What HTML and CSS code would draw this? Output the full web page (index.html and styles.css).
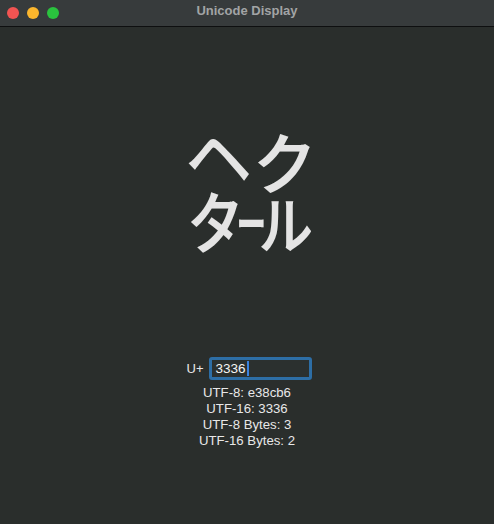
FILE: index.html
```html
<!DOCTYPE html>
<html>
<head>
<meta charset="utf-8">
<link rel="stylesheet" href="styles.css">
</head>
<body>
<div class="window">
  <div class="titlebar">
    <div class="lights">
      <span class="light red"></span>
      <span class="light yellow"></span>
      <span class="light green"></span>
    </div>
    <div class="title">Unicode Display</div>
  </div>
  <div class="content">
    <div class="glyph">&#x3336;</div>
    <div class="inputrow">
      <span class="label">U+</span>
      <div class="field"><span class="value">3336</span><span class="caret"></span></div>
    </div>
    <div class="info">
      <div>UTF-8: e38cb6</div>
      <div>UTF-16: 3336</div>
      <div>UTF-8 Bytes: 3</div>
      <div>UTF-16 Bytes: 2</div>
    </div>
  </div>
</div>
</body>
</html>
```
FILE: styles.css
```css
html, body {
  margin: 0;
  padding: 0;
  background: #2a2e2c;
}
.window {
  width: 494px;
  height: 524px;
  background: #2a2e2c;
  overflow: hidden;
  display: flex;
  flex-direction: column;
  font-family: "Liberation Sans", Arial, sans-serif;
}
.titlebar {
  height: 26px;
  background: #373b3c;
  border-bottom: 1px solid #0e0f10;
  display: flex;
  align-items: center;
  position: relative;
  flex: none;
}
.lights {
  display: flex;
  gap: 8px;
  padding-left: 7px;
}
.light {
  width: 12px;
  height: 12px;
  border-radius: 50%;
  display: block;
}
.red { background: #f25452; }
.yellow { background: #fbb62d; }
.green { background: #2ac33e; }
.title {
  position: absolute;
  left: 0;
  right: 0;
  top: 0;
  height: 26px;
  line-height: 22px;
  text-align: center;
  color: #a2a4a5;
  font-weight: bold;
  font-size: 13px;
}
.content {
  flex: 1;
  display: flex;
  flex-direction: column;
  align-items: center;
}
.glyph {
  margin-top: 85px;
  margin-left: 8px;
  font-family: "Noto Sans CJK JP", sans-serif;
  font-size: 128px;
  line-height: 150px;
  height: 150px;
  color: #e4e4e4;
}
.inputrow {
  margin-top: 95px;
  display: flex;
  align-items: center;
  gap: 6px;
  margin-left: 5px;
}
.label {
  color: #e8e8e8;
  font-size: 13px;
}
.field {
  width: 94px;
  height: 17px;
  border: 3px solid #2d6ea6;
  border-radius: 3px;
  background: #2b302f;
  display: flex;
  align-items: center;
  padding-left: 3px;
}
.value {
  color: #f4f4f4;
  font-size: 13.5px;
}
.caret {
  width: 2px;
  height: 15px;
  background: #3a82e0;
  margin-left: 1px;
}
.info {
  margin-top: 5px;
  color: #e8e8e8;
  font-size: 13.2px;
  line-height: 16px;
  text-align: center;
}
```
